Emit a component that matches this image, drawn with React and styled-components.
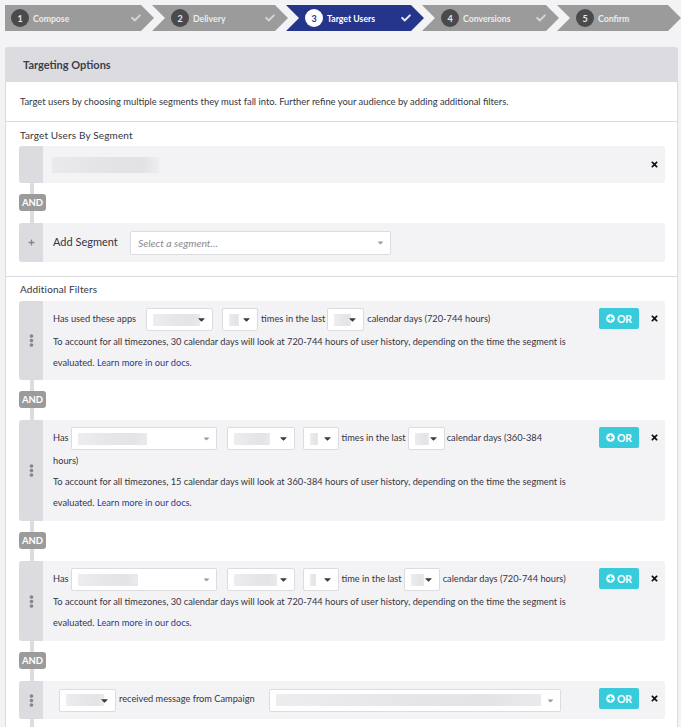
import styled, { createGlobalStyle } from "styled-components";
import { FaCheck, FaPlus, FaPlusCircle, FaTimes, FaEllipsisV, FaCaretDown } from "react-icons/fa";

const steps = [
  { n: 1, label: "Compose", width: 149, first: true, done: true },
  { n: 2, label: "Delivery", width: 136, done: true },
  { n: 3, label: "Target Users", width: 138, active: true, done: true },
  { n: 4, label: "Conversions", width: 137, done: true },
  { n: 5, label: "Confirm", width: 124 },
];

const App = () => {
  return (
    <Page>
      <GlobalStyle />
      <Stepper>
        {steps.map((s) => (
          <Step key={s.n} $width={s.width} $first={s.first} $active={s.active}>
            <StepNumber $active={s.active}>{s.n}</StepNumber>
            <StepLabel $active={s.active}>{s.label}</StepLabel>
            {s.done && (
              <StepCheck $active={s.active}>
                <FaCheck />
              </StepCheck>
            )}
          </Step>
        ))}
      </Stepper>

      <Panel>
        <PanelHeader>Targeting Options</PanelHeader>
        <Intro>
          Target users by choosing multiple segments they must fall into. Further refine your
          audience by adding additional filters.
        </Intro>

        <Section $height={155}>
          <SectionTitle $top={7}>Target Users By Segment</SectionTitle>
          <Row $height={37}>
            <Handle />
            <SegmentName>
              <Blur $w={107} $h={16} />
            </SegmentName>
            <Remove $center>
              <FaTimes />
            </Remove>
          </Row>
          <Joiner>
            <AndBadge>AND</AndBadge>
          </Joiner>
          <Row $height={39}>
            <Handle $size={7}>
              <FaPlus />
            </Handle>
            <AddLabel>Add Segment</AddLabel>
            <Select $w={261} $h={24} $light>
              <Placeholder>Select a segment...</Placeholder>
              <FaCaretDown />
            </Select>
          </Row>
        </Section>

        <Section $height={451} $open>
          <SectionTitle $top={6}>Additional Filters</SectionTitle>

          <Row $height={79}>
            <Handle $size={13}>
              <FaEllipsisV />
            </Handle>
            <FilterBody>
              <Line>
                <Words>Has used these apps</Words>
                <Select $w={67} $ml={10} $blur={47}>
                  <FaCaretDown />
                </Select>
                <Select $w={36} $ml={9} $blur={10}>
                  <FaCaretDown />
                </Select>
                <Words $ml={3}>times in the last</Words>
                <Select $w={37} $ml={2} $blur={17}>
                  <FaCaretDown />
                </Select>
                <Words $ml={3}>calendar days (720-744 hours)</Words>
              </Line>
              <Note days={30} hours="720-744" />
            </FilterBody>
            <FilterActions />
          </Row>
          <Joiner>
            <AndBadge>AND</AndBadge>
          </Joiner>

          <Row $height={101}>
            <Handle $size={13}>
              <FaEllipsisV />
            </Handle>
            <FilterBody>
              <Line>
                <Words>Has</Words>
                <Select $w={146} $ml={2} $blur={69} $light>
                  <FaCaretDown />
                </Select>
                <Select $w={68} $ml={10} $blur={36}>
                  <FaCaretDown />
                </Select>
                <Select $w={36} $ml={8} $blur={8}>
                  <FaCaretDown />
                </Select>
                <Words $ml={3}>times in the last</Words>
                <Select $w={37} $ml={2} $blur={14}>
                  <FaCaretDown />
                </Select>
                <Words $ml={2}>calendar days (360-384</Words>
              </Line>
              <WrappedLine>hours)</WrappedLine>
              <Note days={15} hours="360-384" />
            </FilterBody>
            <FilterActions />
          </Row>
          <Joiner>
            <AndBadge>AND</AndBadge>
          </Joiner>

          <Row $height={80}>
            <Handle $size={13}>
              <FaEllipsisV />
            </Handle>
            <FilterBody>
              <Line>
                <Words>Has</Words>
                <Select $w={146} $ml={2} $blur={60} $light>
                  <FaCaretDown />
                </Select>
                <Select $w={68} $ml={10} $blur={43}>
                  <FaCaretDown />
                </Select>
                <Select $w={36} $ml={8} $blur={6}>
                  <FaCaretDown />
                </Select>
                <Words $ml={3}>time in the last</Words>
                <Select $w={36} $ml={2} $blur={13}>
                  <FaCaretDown />
                </Select>
                <Words $ml={3}>calendar days (720-744 hours)</Words>
              </Line>
              <Note days={30} hours="720-744" />
            </FilterBody>
            <FilterActions />
          </Row>
          <Joiner>
            <AndBadge>AND</AndBadge>
          </Joiner>

          <Row $height={38}>
            <Handle $size={13}>
              <FaEllipsisV />
            </Handle>
            <FilterBody $compact>
              <Line>
                <Select $w={57} $ml={6} $blur={38}>
                  <FaCaretDown />
                </Select>
                <Words $ml={3}>received message from Campaign</Words>
                <Select $w={292} $ml={14} $blur={265} $light>
                  <FaCaretDown />
                </Select>
              </Line>
            </FilterBody>
            <FilterActions />
          </Row>
          <Tail />
        </Section>
      </Panel>
    </Page>
  );
};

const Note = ({ days, hours }) => (
  <>
    <NoteLine>
      To account for all timezones, {days} calendar days will look at {hours} hours of user history,
      depending on the time the segment is
    </NoteLine>
    <NoteLine>
      <Words>evaluated.</Words>
      <DocsLink>Learn more in our docs.</DocsLink>
    </NoteLine>
  </>
);

const FilterActions = () => (
  <Actions>
    <OrButton>
      <FaPlusCircle />
      OR
    </OrButton>
    <Remove>
      <FaTimes />
    </Remove>
  </Actions>
);

export default App;

const GlobalStyle = createGlobalStyle`
  html, body {
    margin: 0;
    padding: 0;
    background: #f3f3f6;
  }
  * {
    box-sizing: border-box;
  }
`;

const Page = styled.div`
  width: 681px;
  height: 727px;
  overflow: hidden;
  padding-top: 5px;
  font-family: "Lato", "Liberation Sans", sans-serif;
  font-size: 10px;
  color: #35353e;
`;

const Stepper = styled.div`
  display: flex;
  padding-left: 5px;
  height: 26px;
`;

const Step = styled.div`
  width: ${(p) => p.$width}px;
  flex-shrink: 0;
  margin-left: ${(p) => (p.$first ? 0 : -2)}px;
  padding-left: ${(p) => (p.$first ? 6 : 19)}px;
  padding-right: 13px;
  display: flex;
  align-items: center;
  background: ${(p) => (p.$active ? "#26358c" : "#9b9b9b")};
  clip-path: ${(p) =>
    p.$first
      ? "polygon(0 0, calc(100% - 13px) 0, 100% 50%, calc(100% - 13px) 100%, 0 100%)"
      : "polygon(0 0, calc(100% - 13px) 0, 100% 50%, calc(100% - 13px) 100%, 0 100%, 13px 50%)"};
`;

const StepNumber = styled.span`
  width: 18px;
  height: 18px;
  border-radius: 50%;
  flex-shrink: 0;
  display: flex;
  align-items: center;
  justify-content: center;
  font-size: 9px;
  font-weight: 700;
  background: ${(p) => (p.$active ? "#fff" : "#4a4a4c")};
  color: ${(p) => (p.$active ? "#26358c" : "#e8e8e8")};
`;

const StepLabel = styled.span`
  margin-left: 4px;
  flex: 1;
  font-size: 8.7px;
  font-weight: 700;
  color: ${(p) => (p.$active ? "#fff" : "#ececec")};
`;

const StepCheck = styled.span`
  display: flex;
  font-size: 10px;
  color: ${(p) => (p.$active ? "#e4e6f4" : "#d4d4d4")};
`;

const Panel = styled.div`
  margin: 16px 3px 0 5px;
  background: #fff;
  border: 1px solid #dcdce0;
  border-top: 0;
  border-bottom: 0;
  border-radius: 3px 3px 0 0;
`;

const PanelHeader = styled.div`
  height: 35px;
  margin: 0 -1px;
  padding-left: 18px;
  display: flex;
  align-items: center;
  background: #dcdce0;
  border-radius: 3px 3px 0 0;
  font-size: 11px;
  font-weight: 700;
  color: #3a3f4c;
`;

const Intro = styled.div`
  height: 40px;
  padding-left: 14px;
  display: flex;
  align-items: center;
  font-size: 9.4px;
  border-bottom: 1px solid #dcdce0;
`;

const Section = styled.section`
  height: ${(p) => p.$height}px;
  padding: 0 12px 0 13px;
  border-bottom: ${(p) => (p.$open ? "0" : "1px solid #dcdce0")};
`;

const SectionTitle = styled.div`
  height: 24px;
  padding: ${(p) => p.$top}px 0 0 1px;
  line-height: 13px;
  font-size: 10px;
  letter-spacing: 0.15px;
  color: #33343c;
`;

const Row = styled.div`
  min-height: ${(p) => p.$height}px;
  height: ${(p) => p.$height}px;
  display: flex;
  align-items: ${(p) => (p.$height < 40 ? "center" : "stretch")};
  background: #f3f3f6;
  border-radius: 3px;
  overflow: hidden;
`;

const Handle = styled.div`
  width: 24px;
  flex-shrink: 0;
  align-self: stretch;
  display: flex;
  align-items: center;
  justify-content: center;
  background: #dcdce0;
  color: #85858a;
  font-size: ${(p) => p.$size || 8}px;
`;

const SegmentName = styled.div`
  flex: 1;
  padding-left: 9px;
  display: flex;
`;

const Blur = styled.span`
  display: block;
  width: ${(p) => p.$w}px;
  height: ${(p) => p.$h}px;
  flex-shrink: 0;
  background: linear-gradient(90deg, #eaeaec 0%, #e4e4e6 45%, #e2e2e4 85%, #eeeef0 100%);
`;

const Joiner = styled.div`
  height: 40px;
  width: 27px;
  padding-bottom: 1px;
  display: flex;
  align-items: center;
  background: linear-gradient(#dcdce0, #dcdce0) no-repeat 11px 0 / 4px 100%;
`;

const AndBadge = styled.span`
  width: 27px;
  height: 17px;
  display: flex;
  align-items: center;
  justify-content: center;
  background: #9b9b9b;
  border-radius: 3px;
  color: #fff;
  font-size: 9.5px;
  font-weight: 700;
`;

const AddLabel = styled.span`
  margin: 0 11px 2px 10px;
  width: 66px;
  font-size: 11px;
  color: #33343c;
`;

const Select = styled.span`
  display: inline-flex;
  align-items: center;
  justify-content: flex-end;
  vertical-align: middle;
  width: ${(p) => p.$w}px;
  height: ${(p) => p.$h || 23}px;
  margin-left: ${(p) => p.$ml || 0}px;
  padding: 0 5px 0 6px;
  background: #fff;
  background-image: ${(p) =>
    p.$blur ? "linear-gradient(90deg, #ededef, #e6e6e8 50%, #e4e4e6 80%, #eaeaec)" : "none"};
  background-repeat: no-repeat;
  background-position: 6px center;
  background-size: ${(p) => p.$blur || 0}px 12px;
  border: 1px solid #dcdce0;
  border-radius: 2px;
  color: ${(p) => (p.$light ? "#9a9a9a" : "#3a3a3a")};
  svg {
    font-size: ${(p) => (p.$light ? 9 : 11)}px;
    flex-shrink: 0;
  }
`;

const Placeholder = styled.span`
  flex: 1;
  padding-left: 1px;
  font-style: italic;
  font-size: 10.4px;
  color: #8a8a90;
`;

const FilterBody = styled.div`
  width: 540px;
  flex-shrink: 0;
  padding: ${(p) => (p.$compact ? "0" : "7px")} 0 0 10px;
  font-size: 9.25px;
`;

const Line = styled.div`
  line-height: 21px;
  min-height: 23px;
  white-space: nowrap;
`;

const Words = styled.span`
  margin-left: ${(p) => p.$ml || 0}px;
`;

const WrappedLine = styled.div`
  line-height: 21px;
`;

const NoteLine = styled.div`
  line-height: 21px;
  display: flex;
  gap: 2.5px;
  white-space: nowrap;
`;

const DocsLink = styled.span`
  color: #2d3a8c;
`;

const Actions = styled.div`
  flex: 1;
  align-self: flex-start;
  display: flex;
  align-items: flex-start;
  padding: 7px 0 0 16px;
`;

const OrButton = styled.span`
  width: 40px;
  height: 21px;
  display: flex;
  align-items: center;
  justify-content: center;
  gap: 2px;
  background: #38cbdc;
  border-radius: 2px;
  color: #fff;
  font-size: 10.5px;
  font-weight: 700;
  svg {
    font-size: 9px;
  }
`;

const Remove = styled.span`
  margin-left: ${(p) => (p.$center ? 0 : 11)}px;
  margin-right: ${(p) => (p.$center ? 6 : 0)}px;
  height: ${(p) => (p.$center ? "auto" : "21px")};
  display: flex;
  align-items: center;
  color: #111;
  font-size: 9px;
`;

const Tail = styled.div`
  width: 4px;
  height: 10px;
  margin-left: 11px;
  background: #dcdce0;
`;
